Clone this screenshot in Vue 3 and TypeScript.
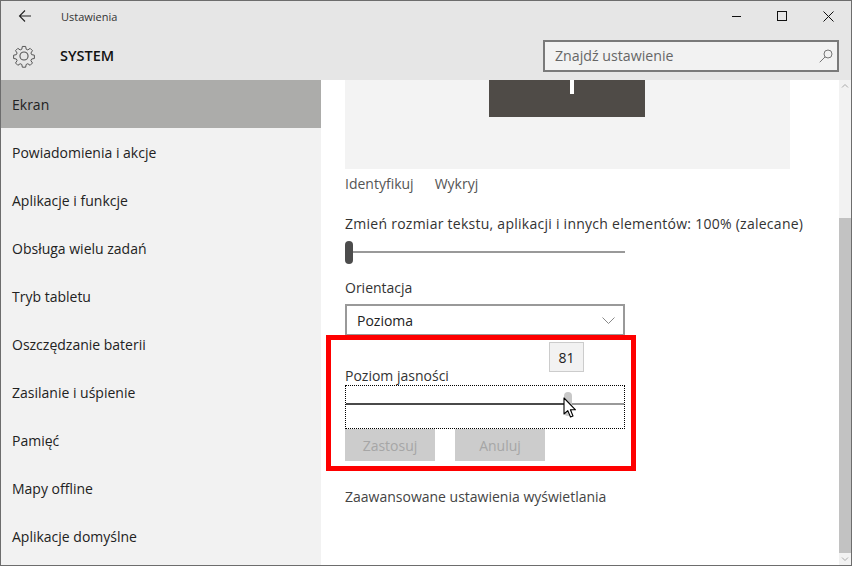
<script setup lang="ts">
const navItems: string[] = [
  'Powiadomienia i akcje',
  'Aplikacje i funkcje',
  'Obsługa wielu zadań',
  'Tryb tabletu',
  'Oszczędzanie baterii',
  'Zasilanie i uśpienie',
  'Pamięć',
  'Mapy offline',
  'Aplikacje domyślne',
]
</script>

<template>
  <div class="window">
    <header class="titlebar">
      <svg class="back" width="16" height="14" viewBox="0 0 16 14" fill="none" stroke="#222" stroke-width="1.1">
        <path d="M13 7H1.5M7 1.5L1.5 7L7 12.5" />
      </svg>
      <span class="title">Ustawienia</span>
      <div class="controls">
        <svg width="11" height="11" viewBox="0 0 11 11" stroke="#111" fill="none"><path d="M1 5.5H10" /></svg>
        <svg width="11" height="11" viewBox="0 0 11 11" stroke="#111" fill="none"><rect x=".5" y=".5" width="9" height="9" /></svg>
        <svg width="11" height="11" viewBox="0 0 11 11" stroke="#111" fill="none"><path d="M.5 .5L10.5 10.5M10.5 .5L.5 10.5" /></svg>
      </div>
    </header>
    <div class="heading">
      <svg class="gear" width="24" height="24" viewBox="0 0 26 26" fill="none" stroke="#555" stroke-width="1.2">
        <path d="M11 1.5h4l.6 3.3 2 .9 2.8-1.9 2.8 2.8-1.9 2.8.9 2 3.3.6v4l-3.3.6-.9 2 1.9 2.8-2.8 2.8-2.8-1.9-2 .9-.6 3.3h-4l-.6-3.3-2-.9-2.8 1.9-2.8-2.8 1.9-2.8-.9-2-3.3-.6v-4l3.3-.6.9-2L2.8 6.6l2.8-2.8 2.8 1.9 2-.9z" transform="translate(1.3 1.3) scale(.9)" />
        <circle cx="13" cy="13" r="4.4" />
      </svg>
      <span class="system">SYSTEM</span>
      <div class="search">
        <span>Znajdź ustawienie</span>
        <svg width="14" height="14" viewBox="0 0 14 14" fill="none" stroke="#777">
          <circle cx="9" cy="5" r="4" />
          <path d="M6.1 7.9L.7 13.3" />
        </svg>
      </div>
    </div>
    <div class="body">
      <nav class="sidebar">
        <div class="nav-item active">Ekran</div>
        <div v-for="item in navItems" :key="item" class="nav-item">{{ item }}</div>
      </nav>
      <main class="content">
        <div class="pane">
          <div class="preview">
            <div class="monitor"><span class="tick"></span></div>
          </div>
          <div class="links">
            <span>Identyfikuj</span>
            <span>Wykryj</span>
          </div>
          <div class="label scale-label">Zmień rozmiar tekstu, aplikacji i innych elementów: 100% (zalecane)</div>
          <div class="slider scale-slider">
            <span class="thumb-dark"></span>
          </div>
          <div class="label orient-label">Orientacja</div>
          <div class="select">
            <span>Pozioma</span>
            <svg width="13" height="7" viewBox="0 0 13 7" fill="none" stroke="#888"><path d="M.5 .5L6.5 6.5L12.5 .5" /></svg>
          </div>
          <div class="label bright-label">Poziom jasności</div>
          <div class="focus-box">
            <div class="track"><span class="fill"></span></div>
            <span class="thumb-light"></span>
            <span class="tooltip">81</span>
            <svg class="cursor" width="14" height="22" viewBox="0 0 14 22">
              <path d="M1 1V17L4.8 13.6L7.5 20L10 19L7.4 12.8H12.5Z" fill="#fff" stroke="#000" stroke-width="1.1" stroke-linejoin="round" />
            </svg>
          </div>
          <div class="buttons">
            <button type="button">Zastosuj</button>
            <button type="button">Anuluj</button>
          </div>
          <div class="advanced">Zaawansowane ustawienia wyświetlania</div>
        </div>
        <div class="scrollbar">
          <svg class="arrow" width="12" height="12" viewBox="0 0 12 12" fill="none" stroke="#aaa"><path d="M3 7.5L6 4.5L9 7.5" /></svg>
          <div class="scroll-top"></div>
          <div class="scroll-thumb"></div>
          <svg class="arrow" width="12" height="12" viewBox="0 0 12 12" fill="none" stroke="#aaa"><path d="M3 4.5L6 7.5L9 4.5" /></svg>
        </div>
      </main>
    </div>
    <div class="highlight"></div>
  </div>
</template>

<style>
html, body { margin: 0; padding: 0; }
</style>

<style scoped>
.window {
  position: relative;
  width: 852px;
  height: 566px;
  box-sizing: border-box;
  border: 1px solid #6d6d6d;
  background: #e6e6e6;
  display: flex;
  flex-direction: column;
  overflow: hidden;
  font-family: "Open Sans", "Noto Sans", sans-serif;
  font-size: 14px;
  color: #222;
}
.titlebar {
  height: 30px;
  display: flex;
  align-items: center;
  flex: none;
}
.back { margin-left: 17px; }
.title { margin-left: 27px; font-size: 11px; color: #333; }
.controls {
  margin-left: auto;
  display: flex;
  gap: 35px;
  margin-right: 17px;
}
.heading {
  height: 49px;
  flex: none;
  display: flex;
  align-items: center;
}
.gear { margin-left: 11px; }
.system { margin-left: 24px; font-size: 14.5px; font-weight: 600; color: #111; }
.search {
  margin-left: auto;
  margin-right: 12px;
  width: 296px;
  height: 32px;
  box-sizing: border-box;
  border: 2px solid #7a7a7a;
  background: #f2f2f2;
  display: flex;
  align-items: center;
  justify-content: space-between;
  padding: 0 4px 0 10px;
  color: #666;
  font-size: 14.2px;
}
.body { flex: 1; display: flex; min-height: 0; }
.sidebar {
  width: 320px;
  flex: none;
  background: #f2f2f2;
}
.nav-item {
  height: 48px;
  line-height: 50px;
  padding-left: 11px;
  color: #222;
}
.active { background: #acacaa; }
.content { flex: 1; display: flex; background: #fff; min-width: 0; }
.pane { flex: 1; padding-left: 24px; position: relative; }
.preview {
  width: 445px;
  height: 89px;
  background: #f3f3f3;
  display: flex;
  justify-content: center;
}
.monitor {
  width: 156px;
  height: 37px;
  margin-right: 1px;
  background: #4f4b47;
  display: flex;
  justify-content: center;
}
.tick { width: 4px; height: 14px; margin-left: 10px; background: #fff; }
.links { display: flex; gap: 21px; height: 30px; line-height: 30px; color: #555; }
.label { line-height: 20px; color: #333; }
.scale-label { margin-top: 15px; letter-spacing: 0.26px; white-space: nowrap; }
.slider { position: relative; width: 280px; }
.scale-slider {
  height: 24px;
  margin-top: 6px;
  display: flex;
  align-items: center;
  background: linear-gradient(#999, #999) center / 100% 2px no-repeat;
}
.thumb-dark {
  width: 8px;
  height: 23px;
  border-radius: 4px;
  background: #4c4c4c;
}
.orient-label { margin-top: 14px; }
.select {
  width: 280px;
  height: 32px;
  margin-top: 6px;
  box-sizing: border-box;
  border: 2px solid #999;
  display: flex;
  align-items: center;
  justify-content: space-between;
  padding: 0 8px 0 10px;
  color: #222;
}
.bright-label { margin-top: 31px; line-height: 18px; }
.focus-box {
  position: relative;
  width: 280px;
  height: 44px;
  box-sizing: border-box;
  border: 1px dotted #000;
  padding-bottom: 7px;
  display: flex;
  align-items: center;
}
.track { width: 100%; height: 2px; background: #999; }
.fill { display: block; width: 79%; height: 100%; background: #4a4a4a; }
.thumb-light {
  position: absolute;
  left: 218px;
  top: 6px;
  width: 8px;
  height: 24px;
  border-radius: 4px;
  background: #c8c8c8;
}
.tooltip {
  position: absolute;
  left: 203px;
  top: -44px;
  width: 35px;
  height: 30px;
  box-sizing: border-box;
  border: 1px solid #ccc;
  background: #f2f2f2;
  display: flex;
  align-items: center;
  justify-content: center;
  font-size: 14px;
  color: #222;
}
.cursor { position: absolute; left: 217px; top: 11px; }
.buttons { display: flex; gap: 20px; }
.buttons button {
  width: 90px;
  height: 32px;
  border: 0;
  padding: 0;
  background: #cccccc;
  color: #a6a6a6;
  font: inherit;
}
.advanced { margin-top: 25px; line-height: 22px; color: #444; }
.scrollbar {
  width: 12px;
  flex: none;
  background: #f2f2f2;
  display: flex;
  flex-direction: column;
}
.arrow { flex: none; }
.scroll-top { height: 126px; flex: none; }
.scroll-thumb { flex: 1; background: #c2c2c2; }
.highlight {
  position: absolute;
  left: 325px;
  top: 334px;
  width: 310px;
  height: 136px;
  box-sizing: border-box;
  border: 5px solid #fe0000;
  pointer-events: none;
}
</style>
